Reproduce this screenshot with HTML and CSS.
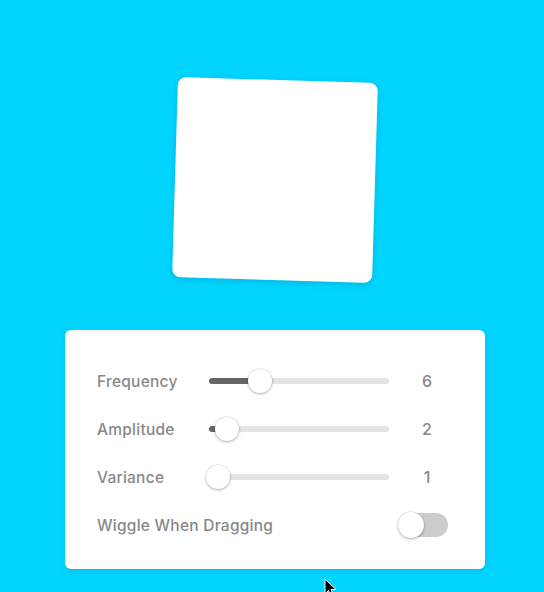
FILE: index.html
```html
<!DOCTYPE html>
<html>
<head>
<meta charset="utf-8">
<link rel="stylesheet" href="styles.css">
</head>
<body>
<div class="page">
  <div class="stage">
    <div class="card"></div>
  </div>
  <div class="panel">
    <div class="row">
      <span class="label">Frequency</span>
      <div class="slider">
        <div class="track"></div>
        <div class="fill" style="width:50px"></div>
        <div class="thumb" style="left:39px"></div>
      </div>
      <span class="value">6</span>
    </div>
    <div class="row">
      <span class="label">Amplitude</span>
      <div class="slider">
        <div class="track"></div>
        <div class="fill" style="width:12px"></div>
        <div class="thumb" style="left:6px"></div>
      </div>
      <span class="value">2</span>
    </div>
    <div class="row">
      <span class="label">Variance</span>
      <div class="slider">
        <div class="track"></div>
        <div class="thumb" style="left:-3px"></div>
      </div>
      <span class="value">1</span>
    </div>
    <div class="row">
      <span class="label">Wiggle When Dragging</span>
      <div class="toggle"><div class="knob"></div></div>
    </div>
  </div>
  <svg class="cursor" width="14" height="20" viewBox="0 0 14 20">
    <path d="M1 1 L1 16 L4.5 12.5 L7 18.5 L9.5 17.5 L7 11.5 L12 11.5 Z" fill="#000" stroke="#fff" stroke-width="1"/>
  </svg>
</div>
</body>
</html>
```

FILE: styles.css
```css
html, body {
  margin: 0;
  padding: 0;
  background: #00d4ff;
}
.page {
  position: relative;
  width: 544px;
  height: 592px;
  overflow: hidden;
  font-family: Inter, "Liberation Sans", Arial, sans-serif;
}
.stage {
  padding-top: 80px;
  padding-left: 175px;
  height: 200px;
}
.card {
  width: 200px;
  height: 200px;
  background: #fff;
  border-radius: 8px;
  transform: rotate(1.7deg);
  box-shadow: 0 2px 6px rgba(0, 60, 90, 0.18);
}
.panel {
  margin-top: 50px;
  margin-left: 65px;
  width: 420px;
  box-sizing: border-box;
  height: 239px;
  background: #fff;
  border-radius: 6px;
  padding: 27px 20px 0 32px;
  box-shadow: 0 2px 6px rgba(0, 60, 90, 0.12);
}
.row {
  height: 48px;
  display: flex;
  align-items: center;
}
.label {
  width: 112px;
  font-size: 15.5px;
  font-weight: 500;
  color: #888888;
  white-space: nowrap;
  letter-spacing: 0.25px;
}
.slider {
  position: relative;
  width: 180px;
  height: 24px;
}
.track {
  position: absolute;
  left: 0;
  right: 0;
  top: 9px;
  height: 6px;
  border-radius: 3px;
  background: #e4e4e4;
}
.fill {
  position: absolute;
  left: 0;
  top: 9px;
  height: 6px;
  border-radius: 3px;
  background: #666;
}
.thumb {
  position: absolute;
  top: 0;
  width: 24px;
  height: 24px;
  border-radius: 50%;
  background: #fff;
  box-shadow: 0 1px 3px rgba(0, 0, 0, 0.3), 0 0 0 0.5px rgba(0, 0, 0, 0.08);
}
.value {
  width: 76px;
  text-align: center;
  font-size: 16px;
  font-weight: 500;
  color: #888888;
}
.toggle {
  margin-left: auto;
  margin-right: 17px;
  position: relative;
  width: 50px;
  height: 24px;
  border-radius: 12px;
  background: #cccccc;
}
.knob {
  position: absolute;
  left: 0;
  top: -1px;
  width: 26px;
  height: 26px;
  border-radius: 50%;
  background: #fff;
  box-shadow: 0 1px 3px rgba(0, 0, 0, 0.3), 0 0 0 0.5px rgba(0, 0, 0, 0.08);
}
.cursor {
  position: absolute;
  left: 324px;
  top: 578px;
}
```
